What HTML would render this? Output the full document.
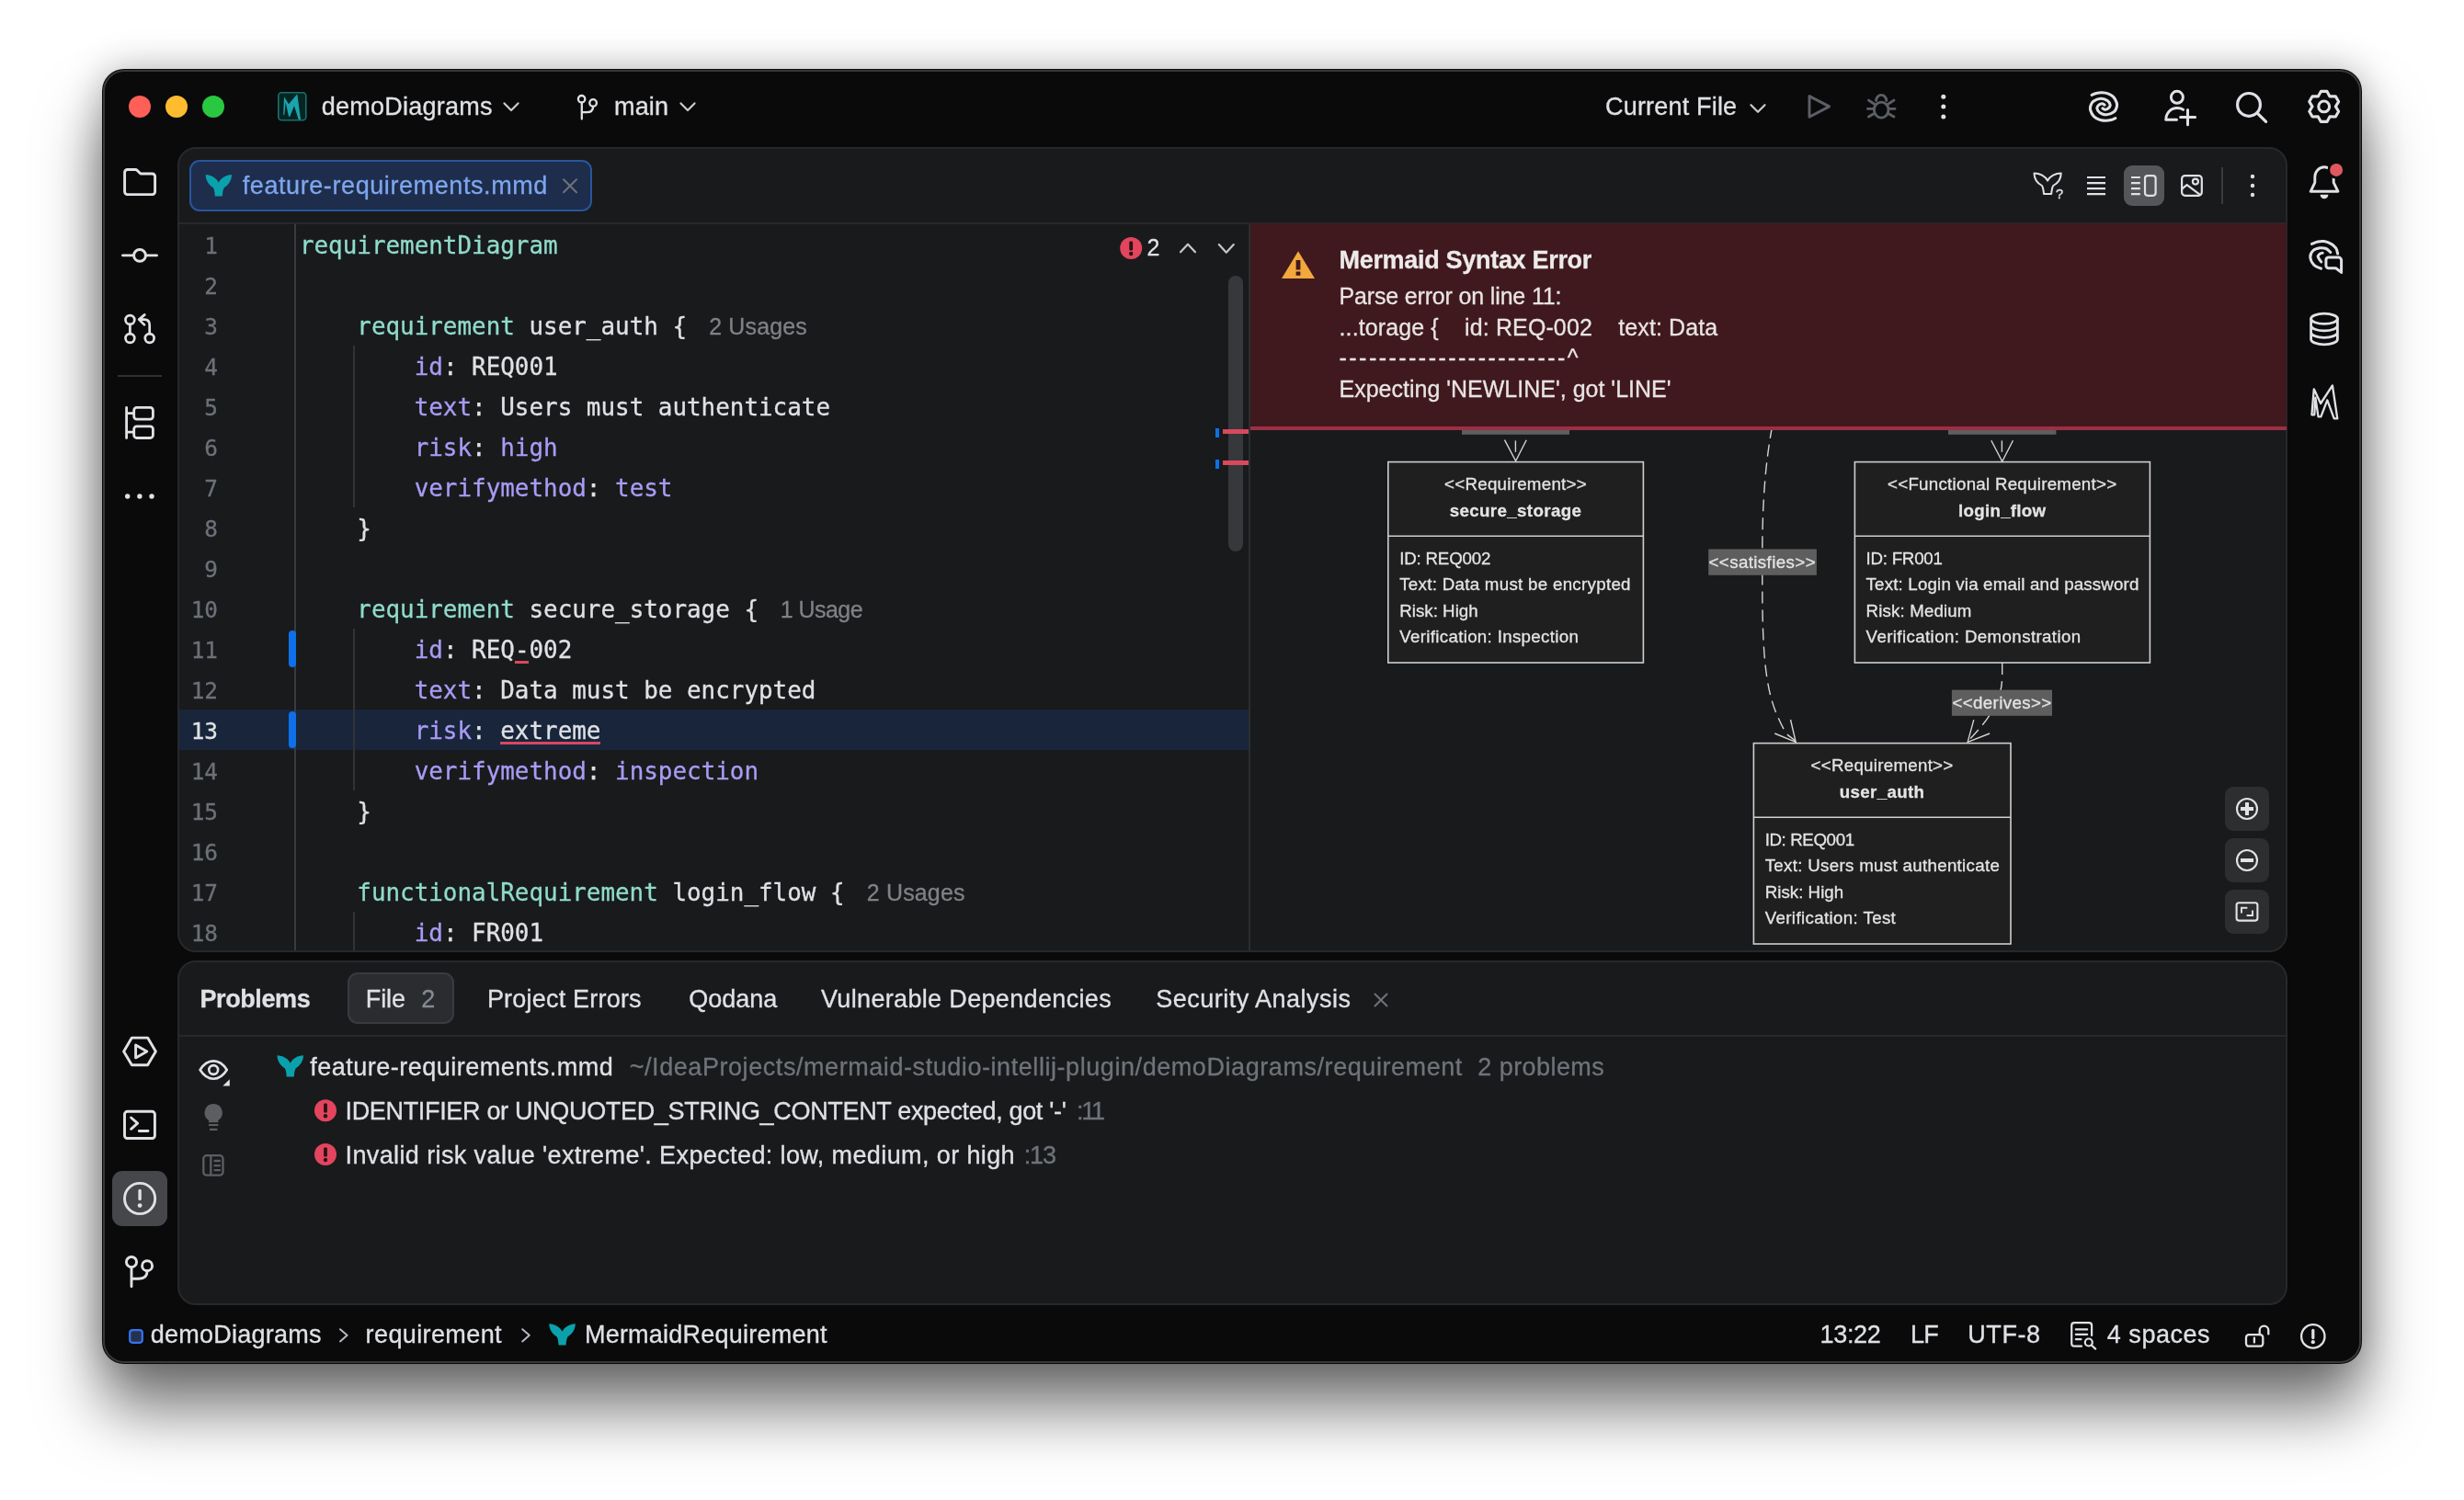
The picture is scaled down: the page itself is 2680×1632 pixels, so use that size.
<!DOCTYPE html>
<html lang="en"><head><meta charset="utf-8"><title>feature-requirements.mmd</title>
<style>
html,body{margin:0;padding:0;}
body{width:2680px;height:1632px;background:#fff;position:relative;overflow:hidden;font-family:"Liberation Sans",sans-serif;}
.abs,.win *{position:absolute;box-sizing:border-box;}
.win{position:absolute;left:111px;top:75px;width:2458px;height:1409px;border-radius:24px;background:#0a0a0b;
 box-shadow:0 50px 69px rgba(0,0,0,.53),0 0 42px rgba(0,0,0,.265);}
.winedge{left:1px;top:1px;width:2456px;height:1407px;border-radius:23px;box-shadow:inset 0 0 0 2px rgba(255,255,255,.19);pointer-events:none;}
/* everything inside .root uses page coordinates */
.root{left:-111px;top:-75px;width:2680px;height:1632px;}
.panel{background:#191a1c;border:2px solid #26282b;border-radius:20px;overflow:hidden;}
.root{will-change:transform;}
.t,.cl,.ln{-webkit-text-stroke:0.3px;}
.t{white-space:pre;line-height:40px;height:40px;font-family:"Liberation Sans",sans-serif;}
.cl{left:325.9px;white-space:pre;font-family:"DejaVu Sans Mono","Liberation Mono",monospace;font-size:25.91px;line-height:44px;height:44px;color:#dfe1e5;}
.ln{left:137px;width:100px;text-align:right;white-space:pre;font-family:"DejaVu Sans Mono","Liberation Mono",monospace;font-size:24.4px;line-height:44px;height:44px;}
.cl span{position:static;}
.err{color:#dfe1e5;background:linear-gradient(#d9485f,#d9485f) left bottom 0px/100% 3px no-repeat;}
svg{position:absolute;overflow:visible;}
.ic{fill:none;stroke:#dfe1e5;stroke-width:2.6;stroke-linecap:round;stroke-linejoin:round;}
.icg{fill:none;stroke:#5c5f66;stroke-width:2.6;stroke-linecap:round;stroke-linejoin:round;}
</style></head>
<body>
<div class="win"><div class="root">

<!-- traffic lights -->
<div style="left:140px;top:104px;width:24px;height:24px;border-radius:50%;background:#fe5f57"></div>
<div style="left:180px;top:104px;width:24px;height:24px;border-radius:50%;background:#febc2e"></div>
<div style="left:220px;top:104px;width:24px;height:24px;border-radius:50%;background:#28c840"></div>



<!-- editor island -->
<div class="panel" style="left:193px;top:160px;width:2295px;height:876px"></div>
<!-- tab bar divider -->
<div style="left:195px;top:242px;width:2291px;height:2px;background:#26282b"></div>
<!-- editor tab -->
<div style="left:206px;top:174px;width:438px;height:56px;border-radius:11px;background:#1d2d4b;border:2px solid #29559b"></div>
<!-- tab toolbar -->
<div style="left:2310px;top:180px;width:44px;height:44px;border-radius:9px;background:#55565a"></div>
<div style="left:2416px;top:182px;width:2px;height:40px;background:#393b40"></div>
<!-- caret row -->
<div style="left:195px;top:772px;width:1163px;height:44px;background:#18253b"></div>
<!-- gutter line / indent guides -->
<div style="left:320px;top:244px;width:2px;height:790px;background:#393b40"></div>
<div style="left:384px;top:376px;width:2px;height:176px;background:#313337"></div>
<div style="left:384px;top:684px;width:2px;height:132px;background:#313337"></div>
<div style="left:384px;top:816px;width:2px;height:44px;background:#313337"></div>
<div style="left:384px;top:992px;width:2px;height:42px;background:#313337"></div>
<!-- change markers -->
<div style="left:314px;top:686px;width:8px;height:40px;border-radius:4px;background:#0e70e8"></div>
<div style="left:314px;top:774px;width:8px;height:40px;border-radius:4px;background:#0e70e8"></div>
<!-- scrollbar + stripe marks -->
<div style="left:1336px;top:300px;width:16px;height:300px;border-radius:8px;background:#37383c"></div>
<div style="left:1321.5px;top:465.5px;width:4.5px;height:10.5px;background:#0e70e8"></div>
<div style="left:1330px;top:467px;width:28px;height:5px;background:#d9485f"></div>
<div style="left:1321.5px;top:499.5px;width:4.5px;height:10.5px;background:#0e70e8"></div>
<div style="left:1330px;top:501px;width:28px;height:5px;background:#d9485f"></div>
<!-- splitter -->
<div style="left:1357.5px;top:244px;width:2.5px;height:790px;background:#2b2d30"></div>

<!-- code -->
<div class="ln" style="top:245.56px;color:#6c7078">1</div>
<div class="cl" style="top:245.04px"><span style="color:#8fdccb">requirementDiagram</span></div>
<div class="ln" style="top:289.56px;color:#6c7078">2</div>
<div class="ln" style="top:333.56px;color:#6c7078">3</div>
<div class="cl" style="top:333.04px">    <span style="color:#8fdccb">requirement</span><span style="color:#dfe1e5"> user_auth {</span></div>
<div class="ln" style="top:377.56px;color:#6c7078">4</div>
<div class="cl" style="top:377.04px">        <span style="color:#a99bf5">id</span><span style="color:#dfe1e5">: REQ001</span></div>
<div class="ln" style="top:421.56px;color:#6c7078">5</div>
<div class="cl" style="top:421.04px">        <span style="color:#a99bf5">text</span><span style="color:#dfe1e5">: Users must authenticate</span></div>
<div class="ln" style="top:465.56px;color:#6c7078">6</div>
<div class="cl" style="top:465.04px">        <span style="color:#a99bf5">risk</span><span style="color:#dfe1e5">: </span><span style="color:#a99bf5">high</span></div>
<div class="ln" style="top:509.56px;color:#6c7078">7</div>
<div class="cl" style="top:509.04px">        <span style="color:#a99bf5">verifymethod</span><span style="color:#dfe1e5">: </span><span style="color:#a99bf5">test</span></div>
<div class="ln" style="top:553.56px;color:#6c7078">8</div>
<div class="cl" style="top:553.04px">    <span style="color:#dfe1e5">}</span></div>
<div class="ln" style="top:597.56px;color:#6c7078">9</div>
<div class="ln" style="top:641.56px;color:#6c7078">10</div>
<div class="cl" style="top:641.04px">    <span style="color:#8fdccb">requirement</span><span style="color:#dfe1e5"> secure_storage {</span></div>
<div class="ln" style="top:685.56px;color:#6c7078">11</div>
<div class="cl" style="top:685.04px">        <span style="color:#a99bf5">id</span><span style="color:#dfe1e5">: REQ</span><span class="err">-</span><span style="color:#dfe1e5">002</span></div>
<div class="ln" style="top:729.56px;color:#6c7078">12</div>
<div class="cl" style="top:729.04px">        <span style="color:#a99bf5">text</span><span style="color:#dfe1e5">: Data must be encrypted</span></div>
<div class="ln" style="top:773.56px;color:#dfe1e5">13</div>
<div class="cl" style="top:773.04px">        <span style="color:#a99bf5">risk</span><span style="color:#dfe1e5">: </span><span class="err">extreme</span></div>
<div class="ln" style="top:817.56px;color:#6c7078">14</div>
<div class="cl" style="top:817.04px">        <span style="color:#a99bf5">verifymethod</span><span style="color:#dfe1e5">: </span><span style="color:#a99bf5">inspection</span></div>
<div class="ln" style="top:861.56px;color:#6c7078">15</div>
<div class="cl" style="top:861.04px">    <span style="color:#dfe1e5">}</span></div>
<div class="ln" style="top:905.56px;color:#6c7078">16</div>
<div class="ln" style="top:949.56px;color:#6c7078">17</div>
<div class="cl" style="top:949.04px">    <span style="color:#8fdccb">functionalRequirement</span><span style="color:#dfe1e5"> login_flow {</span></div>
<div class="ln" style="top:993.56px;color:#6c7078">18</div>
<div class="cl" style="top:993.04px">        <span style="color:#a99bf5">id</span><span style="color:#dfe1e5">: FR001</span></div>

<!-- preview -->

<!-- diagram -->
<svg style="left:1360px;top:244px" width="1127" height="790" viewBox="1360 244 1127 790">
 <g fill="#1f1f20" stroke="#cfcfcf" stroke-width="1.6">
  <rect x="1509.8" y="502.6" width="277.6" height="218.4"/>
  <rect x="2017.4" y="502.6" width="321" height="218.4"/>
  <rect x="1907.4" y="808.6" width="279.6" height="218.4"/>
  <path d="M1509.8 583.2H1787.4M2017.4 583.2H2338.4M1907.4 889.2H2187" fill="none"/>
 </g>
 <g fill="none" stroke="#d4d4d4" stroke-width="1.4">
  <path d="M1648.4 479.4V491.8"/>
  <path d="M1636.5 478.7L1648.6 501.5L1660.2 478.7"/>
  <path d="M2177.4 479.4V491.8"/>
  <path d="M2165.8 479.2L2177.7 502L2189.5 479.2"/>
  <path d="M1927.5 464C1920 505 1917 545 1916.8 600V640C1917 700 1919 745 1932 776S1946 798 1953 807" stroke-dasharray="13 7"/>
  <path d="M1930.3 798L1953.2 807.3L1947.5 783"/>
  <path d="M2177.7 721V735C2177.7 750 2174 762 2166 775S2150 796 2141 806" stroke-dasharray="13 7"/>
  <path d="M2146.8 783.1L2140.2 807.3L2164.1 798"/>
 </g>
 <g fill="#5e5e5e">
  <rect x="1590" y="466" width="117" height="6.8"/>
  <rect x="2119" y="466" width="117.4" height="6.8"/>
  <rect x="1858.2" y="597.4" width="117.7" height="28.4"/>
  <rect x="2122.9" y="750.6" width="109.1" height="28.2"/>
 </g>
</svg>
<!-- error banner -->
<div style="left:1360px;top:243px;width:1127px;height:225px;background:#3f191e;border-bottom:4px solid #9d2f45"></div>
<svg style="left:1393px;top:272px" width="38" height="32" viewBox="0 0 38 32"><path d="M19 1.2L37 31H1Z" fill="#f2a83c"/><path d="M16.6 11h4.8v10.5h-4.8zM16.6 23.4h4.8v4.4h-4.8z" fill="#3f191e"/></svg>
<!-- zoom buttons -->
<div style="left:2420px;top:856px;width:48px;height:48px;border-radius:9px;background:#2d2e30"></div>
<div style="left:2420px;top:912px;width:48px;height:48px;border-radius:9px;background:#2d2e30"></div>
<div style="left:2420px;top:968px;width:48px;height:48px;border-radius:9px;background:#2d2e30"></div>
<svg style="left:2420px;top:856px" width="48" height="160" viewBox="0 0 48 160"><g fill="none" stroke="#e3e3e3" stroke-width="2.1">
 <circle cx="24" cy="24" r="11"/><path d="M17 24h14M24 17v14" stroke-width="4"/>
 <circle cx="24" cy="80" r="11"/><path d="M17 80h14" stroke-width="4"/>
 <rect x="12.6" y="126.2" width="22.8" height="19.4" rx="2.5"/><path d="M18 137.4v-5.6h6.4M30 134.4v5.6h-6.4" stroke-width="1.9"/>
</g></svg>


<!-- problems island -->
<div class="panel" style="left:193px;top:1045px;width:2295px;height:375px"></div>
<div style="left:195px;top:1126px;width:2291px;height:2px;background:#26282b"></div>
<div style="left:378px;top:1058px;width:116px;height:56px;border-radius:11px;background:#2a2c30;border:2px solid #393b40"></div>

<!--BOTTOM-->

<!-- left stripe selection -->
<div style="left:122px;top:1274px;width:60px;height:60px;border-radius:11px;background:#46474b"></div>
<div style="left:128px;top:408px;width:48px;height:2px;background:#2e3033"></div>

<svg style="left:0;top:0" width="2680" height="1632" viewBox="0 0 2680 1632">
<rect x="302.8" y="100.8" width="30" height="30" rx="3.5" fill="#052523" stroke="#1c6f69" stroke-width="1.6"/>
<path d="M308.2 125.0L309.0 105.3L314.0 113.3L323.3 102.3L327.0 130.0L324.7 130.0L320.0 115.3L315.3 126.7L314.0 126.7L310.7 111.3L309.3 125.0Z" fill="#1aa5ad"/>
<path d="M548.5 112.4 L556.0 120.0 L563.5 112.4" fill="none" stroke="#c9cbd0" stroke-width="2.2" stroke-linecap="round" stroke-linejoin="round"/>
<path d="M740.5 112.4 L748.0 120.0 L755.5 112.4" fill="none" stroke="#c9cbd0" stroke-width="2.2" stroke-linecap="round" stroke-linejoin="round"/>
<path d="M1904.5 114.2 L1912.0 121.8 L1919.5 114.2" fill="none" stroke="#c9cbd0" stroke-width="2.2" stroke-linecap="round" stroke-linejoin="round"/>
<g class="ic" style="stroke-width:2.3"><circle cx="632.6" cy="107.7" r="3.7"/><circle cx="645.1" cy="111.9" r="3.8"/><path d="M632.8 111.6V129.4M645.1 115.9C645.1 121 642 122.1 638 122.1H632.9"/></g>
<path class="icg" style="stroke-width:2.9" d="M1968 104.6V127.2L1989.6 115.9Z"/>
<g class="icg" style="stroke-width:2.9"><ellipse cx="2046.2" cy="119.6" rx="7.8" ry="8.5"/><path d="M2040.6 109.4A5.6 6 0 0 1 2051.8 109.4"/><path d="M2032.5 109.1 L2038.4 113.0M2059.9 109.1 L2054.0 113.0M2031.4 118.4 L2038.2 118.4M2061.0 118.4 L2054.2 118.4M2032.5 127.0 L2038.6 123.6M2059.9 127.0 L2053.8 123.6"/></g>
<circle cx="2113.8" cy="105.3" r="2.5" fill="#dfe1e5"/>
<circle cx="2113.8" cy="116.1" r="2.5" fill="#dfe1e5"/>
<circle cx="2113.8" cy="126.9" r="2.5" fill="#dfe1e5"/>
<g class="ic" style="stroke-width:3.1"><path d="M2275.2 103.4C2276.0 103.1 2278.1 101.8 2280.0 101.4C2281.9 101.0 2284.3 100.7 2286.4 100.8C2288.5 100.9 2290.8 101.1 2292.8 101.9C2294.8 102.7 2297.0 103.8 2298.6 105.4C2300.2 107.1 2301.6 109.9 2302.2 111.8C2302.8 113.7 2302.6 115.3 2302.1 117.0C2301.6 118.7 2301.0 120.5 2299.2 121.8C2297.4 123.1 2293.8 124.7 2291.2 124.8C2288.6 124.9 2285.5 123.6 2283.8 122.4C2282.1 121.2 2281.0 119.0 2280.8 117.6C2280.7 116.2 2282.0 114.9 2282.9 114.1C2283.8 113.3 2285.4 112.8 2286.4 112.8C2287.4 112.8 2288.6 113.9 2289.0 114.1"/><path d="M2300.8 128.6C2300.0 128.9 2297.9 130.2 2296.0 130.6C2294.1 131.0 2291.7 131.3 2289.6 131.2C2287.5 131.1 2285.2 130.9 2283.2 130.1C2281.2 129.3 2279.0 128.2 2277.4 126.6C2275.8 124.9 2274.4 122.1 2273.8 120.2C2273.2 118.3 2273.4 116.7 2273.9 115.0C2274.4 113.3 2275.0 111.5 2276.8 110.2C2278.6 108.9 2282.2 107.3 2284.8 107.2C2287.4 107.1 2290.5 108.4 2292.2 109.6C2293.9 110.8 2295.0 113.0 2295.2 114.4C2295.3 115.8 2294.0 117.1 2293.1 117.9C2292.2 118.7 2290.6 119.2 2289.6 119.2C2288.6 119.2 2287.4 118.1 2287.0 117.9"/></g>
<g class="ic" style="stroke-width:3"><circle cx="2367.9" cy="105.8" r="6.5"/><path d="M2367.5 130.3H2355.8C2355.8 123 2361 117.6 2368 117.6C2370.8 117.6 2372.8 118.2 2374.6 119.3"/><path d="M2371.6 127.5H2387.6M2379.5 119.4V135.8"/></g>
<g class="ic" style="stroke-width:3.2"><circle cx="2446" cy="113.9" r="12.4"/><path d="M2455.2 123.2L2464.6 132.4"/></g>
<g class="ic" style="stroke-width:3.1"><path d="M2524.4 99.4L2531.0 99.4L2534.0 104.9L2540.3 104.8L2543.6 110.6L2540.4 115.9L2543.6 121.2L2540.3 127.0L2534.0 126.9L2531.0 132.4L2524.4 132.4L2521.3 126.9L2515.1 127.0L2511.8 121.2L2515.0 115.9L2511.8 110.6L2515.1 104.8L2521.3 104.9Z"/><circle cx="2527.7" cy="115.9" r="5.9"/></g>
<path d="M223.7 190.0C229.4 190.0 235.6 193.5 237.8 198.7C240.1 193.5 246.3 190.0 252.0 190.0C252.0 197.1 247.8 201.8 243.7 204.2C242.4 206.5 242.1 210.1 241.9 213.6L233.8 213.6C233.6 210.1 233.3 206.5 232.0 204.2C227.9 201.8 223.7 197.1 223.7 190.0Z" fill="#0aa1ac"/>
<path d="M613 195.3L627 209.3M627 195.3L613 209.3" fill="none" stroke="#6f737a" stroke-width="2" stroke-linecap="round"/>
<path d="M2212.5 188.4C2218.3 188.4 2224.8 191.8 2227.1 196.7C2229.4 191.8 2235.9 188.4 2241.7 188.4C2241.7 195.2 2237.3 199.7 2233.2 202.0C2231.8 204.2 2231.5 207.6 2231.2 211.0L2223.0 211.0C2222.7 207.6 2222.4 204.2 2221.0 202.0C2216.9 199.7 2212.5 195.2 2212.5 188.4Z" fill="none" stroke="#dfe1e5" stroke-width="2" stroke-linejoin="round"/>
<text x="2235.9" y="216" font-family="Liberation Sans, sans-serif" font-size="14.5" stroke="#dfe1e5" stroke-width="0.4" fill="#dfe1e5">?</text>
<path d="M2270 193H2290M2270 199.1H2290M2270 205.1H2290M2270 211.1H2290" fill="none" stroke="#dfe1e5" stroke-width="2.2"/>
<path d="M2318 193H2327.8M2318 199.1H2327.8M2318 205.1H2327.8M2318 211.1H2327.8" fill="none" stroke="#dfe1e5" stroke-width="2.2"/><rect x="2333" y="191.1" width="11.6" height="21.7" rx="3" fill="none" stroke="#dfe1e5" stroke-width="2.2"/>
<g fill="none" stroke="#dfe1e5" stroke-width="2.2" stroke-linejoin="round"><rect x="2373.1" y="191.1" width="21.7" height="21.7" rx="3.5"/><circle cx="2387.9" cy="197.6" r="3"/><path d="M2373.2 205.6L2378.6 201.2L2393.6 212.4"/></g>
<circle cx="2450" cy="192.0" r="2.2" fill="#dfe1e5"/>
<circle cx="2450" cy="202.0" r="2.2" fill="#dfe1e5"/>
<circle cx="2450" cy="212.0" r="2.2" fill="#dfe1e5"/>
<circle cx="1230.2" cy="270.0" r="12.0" fill="#e3455e"/><rect x="1228.3" y="262.4" width="3.8" height="10" rx="1.2" fill="#2a1216"/><circle cx="1230.2" cy="276.0" r="2.2" fill="#2a1216"/>
<path d="M1284.0 274.3 L1292.0 265.7 L1300.0 274.3" fill="none" stroke="#c5c7cb" stroke-width="2.2" stroke-linecap="round" stroke-linejoin="round"/>
<path d="M1325.8 266.1 L1333.8 274.7 L1341.8 266.1" fill="none" stroke="#c5c7cb" stroke-width="2.2" stroke-linecap="round" stroke-linejoin="round"/>
<path class="ic" style="stroke-width:2.9" d="M135.6 187.5a3 3 0 0 1 3-3h8.6a3 3 0 0 1 2.1.9l3.6 3.6h12.7a3 3 0 0 1 3 3v16.6a3 3 0 0 1-3 3h-27a3 3 0 0 1-3-3z"/>
<g class="ic" style="stroke-width:2.9"><circle cx="152" cy="277.9" r="6.4"/><path d="M133.5 277.9H145.6M158.4 277.9H170.5"/></g>
<g class="ic" style="stroke-width:2.7"><circle cx="141.4" cy="348" r="4.9"/><circle cx="141.4" cy="368" r="4.9"/><circle cx="162.7" cy="368" r="4.9"/><path d="M141.4 352.9V363.1M162.7 363.1V353.5C162.7 349.5 160.5 347.6 157 347.6H151.5M157.3 342.4L151.2 347.6L157 353.4"/></g>
<g class="ic" style="stroke-width:2.8"><path d="M137.6 443.5V476.6M137.6 449.6H145.6M137.6 470.1H145.6"/><rect x="145.7" y="443.4" width="20.7" height="12.7" rx="3"/><rect x="145.7" y="463.8" width="20.7" height="12.7" rx="3"/></g>
<circle cx="138.7" cy="540" r="2.7" fill="#dfe1e5"/>
<circle cx="151.9" cy="540" r="2.7" fill="#dfe1e5"/>
<circle cx="165.0" cy="540" r="2.7" fill="#dfe1e5"/>
<g class="ic" style="stroke-width:2.9"><path d="M134.6 1143.9L143.4 1129.1H160.6L169.4 1143.9L160.6 1158.7H143.4Z"/><path d="M147.6 1136.9V1150.9L159.8 1143.9Z"/></g>
<g class="ic" style="stroke-width:2.9"><rect x="135.5" y="1209.3" width="32.9" height="29.2" rx="3"/><path d="M142.6 1216L149.6 1222.2L142.6 1228.3M151.3 1230.5H161"/></g>
<g class="ic" style="stroke-width:2.9"><circle cx="152.1" cy="1304" r="16.6"/><path d="M152.1 1295.4V1304.6" style="stroke-width:3.4"/></g><circle cx="152.1" cy="1311.6" r="2.4" fill="#dfe1e5"/>
<g class="ic" style="stroke-width:2.9"><circle cx="143" cy="1373.1" r="5.6"/><circle cx="160.1" cy="1377.2" r="5.5"/><path d="M143 1378.8V1399.8M160.1 1382.8C160.1 1389 156 1391.3 151 1391.3H143.2"/></g>
<g class="ic" style="stroke-width:2.9"><path d="M2513.2 208.3H2543L2538.2 198.6V192.6A10.2 10.8 0 0 0 2517.8 192.6V198.6Z"/></g><path d="M2523.6 211.8H2532.4A4.4 4.4 0 0 1 2523.6 211.8Z" fill="#dfe1e5"/>
<circle cx="2541.1" cy="184.9" r="9.6" fill="#0a0a0b"/><circle cx="2541.1" cy="184.9" r="7" fill="#e0585f"/>
<g class="ic" style="stroke-width:3"><path d="M2514.5 265.4C2515.6 265.0 2518.8 263.5 2521.0 263.0C2523.2 262.5 2525.5 262.2 2528.0 262.6C2530.5 263.0 2533.8 264.3 2536.0 265.6C2538.2 266.9 2539.9 268.8 2541.0 270.5C2542.1 272.2 2542.3 275.1 2542.6 276.0"/><path d="M2524.5 292.2C2523.2 291.6 2518.9 290.5 2517.0 288.5C2515.1 286.5 2513.0 282.7 2512.8 280.0C2512.6 277.3 2514.2 274.2 2516.0 272.5C2517.8 270.8 2521.0 270.1 2523.3 269.8C2525.6 269.5 2528.1 269.7 2530.0 270.5C2531.9 271.3 2534.0 273.8 2534.8 274.5"/><path d="M2524.7 285.0C2524.1 284.1 2521.5 280.8 2521.2 279.4C2520.9 277.9 2522.2 277.0 2523.0 276.3C2523.8 275.6 2525.7 275.4 2526.2 275.2"/><path d="M2532.4 280.1H2543.6A3 3 0 0 1 2546.6 283.1V296.4L2540.6 291.8H2532.4A3 3 0 0 1 2529.9 289V283.1A3 3 0 0 1 2532.4 280.1Z" fill="#0a0a0b"/></g>
<g class="ic" style="stroke-width:2.8"><ellipse cx="2528" cy="346.8" rx="14.4" ry="5.6"/><path d="M2513.6 346.8V369.2A14.4 5.6 0 0 0 2542.4 369.2V346.8M2513.6 354.3A14.4 5.6 0 0 0 2542.4 354.3M2513.6 361.7A14.4 5.6 0 0 0 2542.4 361.7"/></g>
<path d="M2514.4 451.3L2516.8 423.3L2524.1 439.0L2536.9 419.4L2542.3 455.3L2538.7 455.3L2531.3 435.4L2524.4 453.4L2521.5 453.4L2518.4 432.6L2517.3 451.3Z" fill="none" stroke="#dfe1e5" stroke-width="2.3" stroke-linejoin="round"/>
<path d="M1495.5 1081.5L1508.5 1094.5M1508.5 1081.5L1495.5 1094.5" fill="none" stroke="#6f737a" stroke-width="2" stroke-linecap="round"/>
<g class="ic" style="stroke-width:2.6"><path d="M217.6 1164C222 1157 227 1154.4 232.2 1154.4C237.4 1154.4 242.4 1157 246.8 1164C242.4 1171 237.4 1173.7 232.2 1173.7C227 1173.7 222 1171 217.6 1164Z"/><circle cx="232.2" cy="1164" r="4.9"/></g><path d="M242.3 1181.4H249.8V1174.2Z" fill="#dfe1e5"/>
<path d="M232.2 1201A9.6 9.6 0 0 0 227 1218.7V1221.3H237.4V1218.7A9.6 9.6 0 0 0 232.2 1201Z" fill="#5c5e62"/><path d="M227 1224H237.4M228 1228.8H236.4" stroke="#5c5e62" stroke-width="2.2" fill="none"/>
<g fill="none" stroke="#5c5e62" stroke-width="2.3"><rect x="221.3" y="1257.2" width="21.2" height="21.5" rx="3.5"/><path d="M229.3 1257.2V1278.7M232.6 1263H239.8M232.6 1268.1H239.8M232.6 1273.1H239.8"/></g>
<path d="M301.5 1148.3C307.2 1148.3 313.5 1151.8 315.8 1156.8C318.0 1151.8 324.3 1148.3 330.0 1148.3C330.0 1155.3 325.7 1159.9 321.7 1162.2C320.3 1164.5 320.0 1168.0 319.8 1171.5L311.7 1171.5C311.5 1168.0 311.2 1164.5 309.8 1162.2C305.8 1159.9 301.5 1155.3 301.5 1148.3Z" fill="#0aa1ac"/>
<circle cx="354.0" cy="1208.2" r="12.0" fill="#e3455e"/><rect x="352.1" y="1200.6" width="3.8" height="10" rx="1.2" fill="#2a1216"/><circle cx="354.0" cy="1214.2" r="2.2" fill="#2a1216"/>
<circle cx="354.0" cy="1256.0" r="12.0" fill="#e3455e"/><rect x="352.1" y="1248.4" width="3.8" height="10" rx="1.2" fill="#2a1216"/><circle cx="354.0" cy="1262.0" r="2.2" fill="#2a1216"/>
<rect x="141.2" y="1447.2" width="13.6" height="13.6" rx="3" fill="#25324d" stroke="#3574f0" stroke-width="2.2"/>
<path d="M370.0 1446.2L377.6 1452.8L370.0 1459.4" fill="none" stroke="#b4b8bf" stroke-width="2.0" stroke-linecap="round" stroke-linejoin="round"/>
<path d="M568.2 1446.2L575.8 1452.8L568.2 1459.4" fill="none" stroke="#b4b8bf" stroke-width="2.0" stroke-linecap="round" stroke-linejoin="round"/>
<path d="M597.3 1440.2C603.0 1440.2 609.3 1443.7 611.5 1448.8C613.8 1443.7 620.1 1440.2 625.8 1440.2C625.8 1447.2 621.5 1451.9 617.5 1454.2C616.1 1456.6 615.8 1460.1 615.6 1463.6L607.5 1463.6C607.3 1460.1 607.0 1456.6 605.6 1454.2C601.6 1451.9 597.3 1447.2 597.3 1440.2Z" fill="#0aa1ac"/>
<g fill="none" stroke="#dfe1e5" stroke-width="2.2" stroke-linecap="round"><path d="M2264 1464.7H2256.2A3 3 0 0 1 2253.2 1461.7V1442.2A3 3 0 0 1 2256.2 1439.2H2272.1A3 3 0 0 1 2275.1 1442.2V1453"/><path d="M2257.8 1446.4H2270.2M2257.8 1451.8H2270.2M2257.8 1457.1H2263.5"/><circle cx="2271.8" cy="1460.5" r="4"/><path d="M2274.8 1463.5L2279.2 1467.6"/></g>
<g fill="none" stroke="#dfe1e5" stroke-width="2.3" stroke-linecap="round"><rect x="2443" y="1452.2" width="18.3" height="12.5" rx="3"/><path d="M2451.9 1455.6V1460.6M2457.7 1452V1447.4A4.8 4.8 0 0 1 2467.3 1447.4V1451.4"/></g>
<g class="ic" style="stroke-width:2.3"><circle cx="2515.8" cy="1453.9" r="12.7"/><path d="M2515.8 1447.4V1455.6" style="stroke-width:3.2"/></g><circle cx="2515.8" cy="1460.2" r="2.1" fill="#dfe1e5"/>
</svg>


<span class="t" style="left:349.70px;top:96.23px;font-size:27.04px;color:#dfe1e5;letter-spacing:0.221px;">demoDiagrams</span>
<span class="t" style="left:668.00px;top:96.23px;font-size:27.04px;color:#dfe1e5;letter-spacing:0.109px;">main</span>
<span class="t" style="left:1746.00px;top:96.23px;font-size:27.04px;color:#dfe1e5;letter-spacing:0.177px;">Current File</span>
<span class="t" style="left:263.70px;top:182.03px;font-size:27.04px;color:#7ea6ef;letter-spacing:0.575px;">feature-requirements.mmd</span>
<span class="t" style="left:771.20px;top:335.15px;font-size:24.96px;color:#7f8186;letter-spacing:0.172px;">2 Usages</span>
<span class="t" style="left:848.80px;top:643.15px;font-size:24.96px;color:#7f8186;letter-spacing:-0.529px;">1 Usage</span>
<span class="t" style="left:942.80px;top:951.15px;font-size:24.96px;color:#7f8186;letter-spacing:0.172px;">2 Usages</span>
<span class="t" style="left:1247.60px;top:249.35px;font-size:24.96px;color:#dfe1e5;letter-spacing:0.750px;">2</span>
<span class="t" style="left:1456.50px;top:263.33px;font-size:27.04px;color:#eceaea;font-weight:700;letter-spacing:-0.322px;">Mermaid Syntax Error</span>
<span class="t" style="left:1456.50px;top:302.25px;font-size:24.96px;color:#e9e4e4;letter-spacing:-0.140px;">Parse error on line 11:</span>
<span class="t" style="left:1456.50px;top:335.85px;font-size:24.96px;color:#e9e4e4;letter-spacing:0.137px;">...torage {    id: REQ-002    text: Data</span>
<span class="t" style="left:1456.50px;top:369.35px;font-size:24.96px;color:#e9e4e4;letter-spacing:2.486px;">-----------------------^</span>
<span class="t" style="left:1456.50px;top:403.35px;font-size:24.96px;color:#e9e4e4;letter-spacing:0.025px;">Expecting &#x27;NEWLINE&#x27;, got &#x27;LINE&#x27;</span>
<span class="t" style="left:217.40px;top:1066.93px;font-size:27.04px;color:#dfe1e5;font-weight:700;letter-spacing:-0.402px;">Problems</span>
<span class="t" style="left:397.80px;top:1066.93px;font-size:27.04px;color:#dfe1e5;letter-spacing:-0.117px;">File</span>
<span class="t" style="left:458.30px;top:1066.93px;font-size:27.04px;color:#868a91;letter-spacing:0.812px;">2</span>
<span class="t" style="left:529.90px;top:1066.93px;font-size:27.04px;color:#dfe1e5;letter-spacing:0.192px;">Project Errors</span>
<span class="t" style="left:749.20px;top:1066.93px;font-size:27.04px;color:#dfe1e5;letter-spacing:-0.044px;">Qodana</span>
<span class="t" style="left:893.00px;top:1066.93px;font-size:27.04px;color:#dfe1e5;letter-spacing:0.323px;">Vulnerable Dependencies</span>
<span class="t" style="left:1257.30px;top:1066.93px;font-size:27.04px;color:#dfe1e5;letter-spacing:0.460px;">Security Analysis</span>
<span class="t" style="left:337.30px;top:1140.73px;font-size:27.04px;color:#dfe1e5;letter-spacing:0.480px;">feature-requirements.mmd</span>
<span class="t" style="left:684.70px;top:1140.73px;font-size:27.04px;color:#6f737a;letter-spacing:0.551px;">~/IdeaProjects/mermaid-studio-intellij-plugin/demoDiagrams/requirement</span>
<span class="t" style="left:1607.30px;top:1140.73px;font-size:27.04px;color:#6f737a;letter-spacing:0.419px;">2 problems</span>
<span class="t" style="left:375.50px;top:1189.03px;font-size:27.04px;color:#dfe1e5;letter-spacing:-0.344px;">IDENTIFIER or UNQUOTED_STRING_CONTENT expected, got &#x27;-&#x27;</span>
<span class="t" style="left:1171.00px;top:1189.03px;font-size:27.04px;color:#6f737a;letter-spacing:-2.312px;">:11</span>
<span class="t" style="left:375.50px;top:1236.53px;font-size:27.04px;color:#dfe1e5;letter-spacing:0.376px;">Invalid risk value &#x27;extreme&#x27;. Expected: low, medium, or high</span>
<span class="t" style="left:1113.70px;top:1236.53px;font-size:27.04px;color:#6f737a;letter-spacing:-1.151px;">:13</span>
<span class="t" style="left:163.80px;top:1432.23px;font-size:27.04px;color:#dfe1e5;letter-spacing:0.221px;">demoDiagrams</span>
<span class="t" style="left:397.60px;top:1432.23px;font-size:27.04px;color:#dfe1e5;letter-spacing:0.376px;">requirement</span>
<span class="t" style="left:635.90px;top:1432.23px;font-size:27.04px;color:#dfe1e5;letter-spacing:0.218px;">MermaidRequirement</span>
<span class="t" style="left:1979.60px;top:1432.23px;font-size:27.04px;color:#dfe1e5;letter-spacing:-0.362px;">13:22</span>
<span class="t" style="left:2078.00px;top:1432.23px;font-size:27.04px;color:#dfe1e5;letter-spacing:-0.750px;">LF</span>
<span class="t" style="left:2140.20px;top:1432.23px;font-size:27.04px;color:#dfe1e5;letter-spacing:0.581px;">UTF-8</span>
<span class="t" style="left:2291.80px;top:1432.23px;font-size:27.04px;color:#dfe1e5;letter-spacing:0.516px;">4 spaces</span>
<span class="t" style="left:1571.00px;top:507.11px;font-size:18.72px;color:#e4e4e4;letter-spacing:0.281px;">&lt;&lt;Requirement&gt;&gt;</span>
<span class="t" style="left:1576.70px;top:536.01px;font-size:18.72px;color:#e4e4e4;font-weight:700;letter-spacing:0.380px;">secure_storage</span>
<span class="t" style="left:1522.20px;top:587.81px;font-size:18.72px;color:#e4e4e4;letter-spacing:-0.184px;">ID: REQ002</span>
<span class="t" style="left:1522.20px;top:616.21px;font-size:18.72px;color:#e4e4e4;letter-spacing:0.298px;">Text: Data must be encrypted</span>
<span class="t" style="left:1522.20px;top:644.61px;font-size:18.72px;color:#e4e4e4;letter-spacing:0.027px;">Risk: High</span>
<span class="t" style="left:1522.20px;top:673.01px;font-size:18.72px;color:#e4e4e4;letter-spacing:0.327px;">Verification: Inspection</span>
<span class="t" style="left:2053.00px;top:507.11px;font-size:18.72px;color:#e4e4e4;letter-spacing:0.274px;">&lt;&lt;Functional Requirement&gt;&gt;</span>
<span class="t" style="left:2130.00px;top:536.01px;font-size:18.72px;color:#e4e4e4;font-weight:700;letter-spacing:0.293px;">login_flow</span>
<span class="t" style="left:2029.60px;top:587.81px;font-size:18.72px;color:#e4e4e4;letter-spacing:-0.248px;">ID: FR001</span>
<span class="t" style="left:2029.60px;top:616.21px;font-size:18.72px;color:#e4e4e4;letter-spacing:0.173px;">Text: Login via email and password</span>
<span class="t" style="left:2029.60px;top:644.61px;font-size:18.72px;color:#e4e4e4;letter-spacing:0.143px;">Risk: Medium</span>
<span class="t" style="left:2029.60px;top:673.01px;font-size:18.72px;color:#e4e4e4;letter-spacing:0.388px;">Verification: Demonstration</span>
<span class="t" style="left:1969.55px;top:813.11px;font-size:18.72px;color:#e4e4e4;letter-spacing:0.281px;">&lt;&lt;Requirement&gt;&gt;</span>
<span class="t" style="left:2000.85px;top:842.01px;font-size:18.72px;color:#e4e4e4;font-weight:700;letter-spacing:0.334px;">user_auth</span>
<span class="t" style="left:1919.70px;top:893.81px;font-size:18.72px;color:#e4e4e4;letter-spacing:-0.384px;">ID: REQ001</span>
<span class="t" style="left:1919.70px;top:922.21px;font-size:18.72px;color:#e4e4e4;letter-spacing:0.315px;">Text: Users must authenticate</span>
<span class="t" style="left:1919.70px;top:950.61px;font-size:18.72px;color:#e4e4e4;letter-spacing:0.027px;">Risk: High</span>
<span class="t" style="left:1919.70px;top:979.01px;font-size:18.72px;color:#e4e4e4;letter-spacing:0.370px;">Verification: Test</span>
<span class="t" style="left:1858.50px;top:592.31px;font-size:18.72px;color:#e4e4e4;letter-spacing:0.403px;">&lt;&lt;satisfies&gt;&gt;</span>
<span class="t" style="left:2123.50px;top:745.31px;font-size:18.72px;color:#e4e4e4;letter-spacing:0.365px;">&lt;&lt;derives&gt;&gt;</span>

</div><div class="winedge"></div></div>

</body></html>
